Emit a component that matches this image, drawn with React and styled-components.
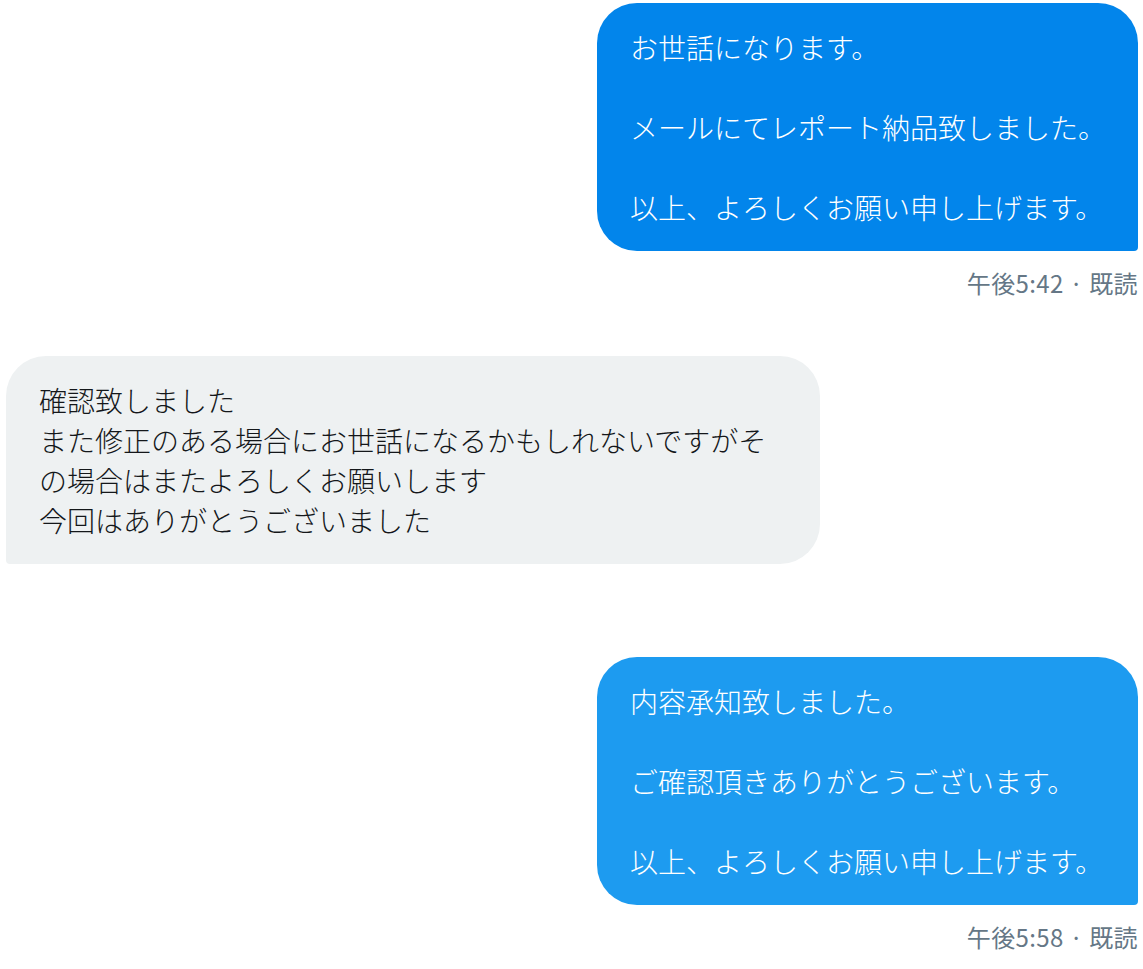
import React from "react";
import styled, { createGlobalStyle } from "styled-components";

const GlobalStyle = createGlobalStyle`
    body {
        margin: 0;
        background: #ffffff;
        font-family: "Noto Sans CJK JP", "Noto Sans", sans-serif;
    }
`;

const Thread = styled.div`
    display: flex;
    flex-direction: column;
    padding: 3px 5px 0 6px;
`;

const Group = styled.div`
    display: flex;
    flex-direction: column;
    align-items: ${(p) => (p.$mine ? "flex-end" : "flex-start")};
    margin-bottom: ${(p) => p.$gap}px;
`;

const Bubble = styled.div`
    box-sizing: border-box;
    min-width: ${(p) => (p.$mine ? "541px" : "0")};
    max-width: 814px;
    padding: 24px 32px 24px 33px;
    border-radius: ${(p) => (p.$mine ? "40px 40px 4px 40px" : "40px 40px 40px 4px")};
    background: ${(p) => p.$bg};
    color: ${(p) => (p.$mine ? "#ffffff" : "#14171a")};
    font-size: 28px;
    font-weight: 300;
    line-height: 40px;
    white-space: pre-wrap;
`;

const Meta = styled.div`
    margin-top: 17px;
    font-size: 24px;
    line-height: 30px;
    color: #657786;
    letter-spacing: 0.4px;
`;

const messages = [
  {
    mine: true,
    bg: "#0285eb",
    text: "お世話になります。\n\nメールにてレポート納品致しました。\n\n以上、よろしくお願い申し上げます。",
    meta: "午後5:42 · 既読",
    gap: 58,
  },
  {
    mine: false,
    bg: "#eef1f2",
    text: "確認致しました\nまた修正のある場合にお世話になるかもしれないですがその場合はまたよろしくお願いします\n今回はありがとうございました",
    gap: 93,
  },
  {
    mine: true,
    bg: "#1d9bf0",
    text: "内容承知致しました。\n\nご確認頂きありがとうございます。\n\n以上、よろしくお願い申し上げます。",
    meta: "午後5:58 · 既読",
    gap: 0,
  },
];

export default function App() {
  return (
    <>
      <GlobalStyle />
      <Thread>
        {messages.map((m, i) => (
          <Group key={i} $mine={m.mine} $gap={m.gap}>
            <Bubble $mine={m.mine} $bg={m.bg}>
              {m.text}
            </Bubble>
            {m.meta && <Meta>{m.meta}</Meta>}
          </Group>
        ))}
      </Thread>
    </>
  );
}
